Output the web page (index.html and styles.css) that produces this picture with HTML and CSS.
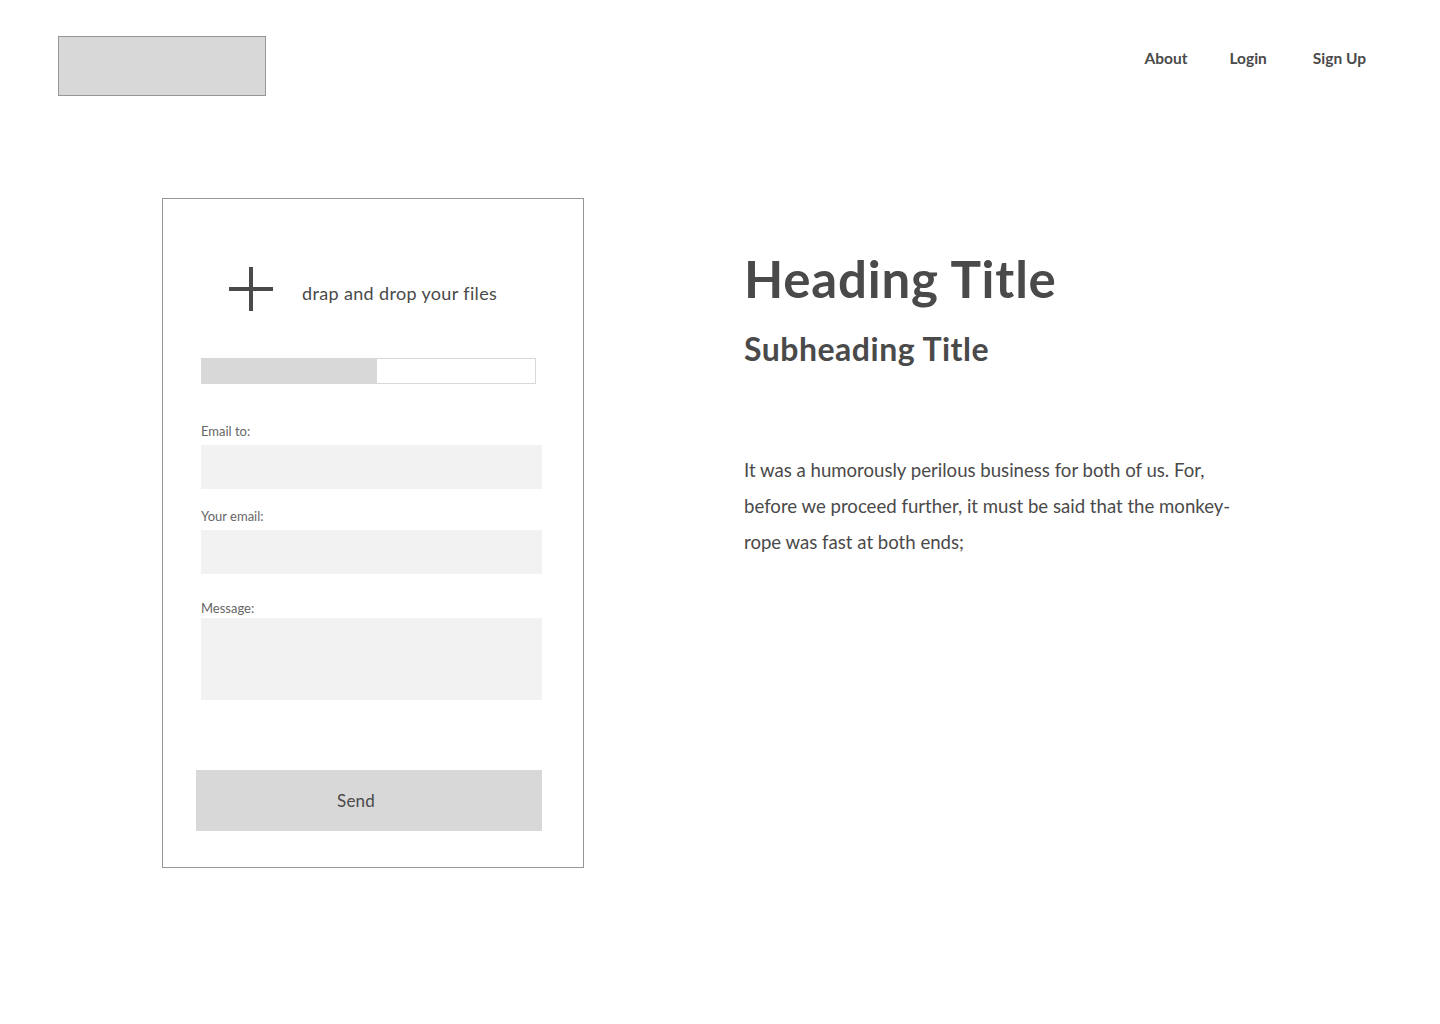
FILE: index.html
```html
<!DOCTYPE html>
<html lang="en">
<head>
<meta charset="utf-8">
<title>Upload</title>
<link rel="stylesheet" href="styles.css">
</head>
<body>
<header class="topbar">
  <div class="logo"></div>
  <nav class="nav">
    <a class="nav-link" href="#">About</a>
    <a class="nav-link" href="#">Login</a>
    <a class="nav-link" href="#">Sign Up</a>
  </nav>
</header>
<main class="main">
  <section class="card">
    <div class="drop">
      <svg class="plus" width="44" height="44" viewBox="0 0 44 44" aria-hidden="true">
        <rect x="0" y="20" width="44" height="4" fill="#4a4a4a"/>
        <rect x="20" y="0" width="4" height="44" fill="#4a4a4a"/>
      </svg>
      <span class="drop-text">drap and drop your files</span>
    </div>
    <div class="progress"><div class="progress-fill" style="width:175px"></div></div>
    <label class="label label-first">Email to:</label>
    <div class="input"></div>
    <label class="label label-second">Your email:</label>
    <div class="input"></div>
    <label class="label label-third">Message:</label>
    <div class="textarea"></div>
    <button class="send">Send</button>
  </section>
  <section class="content">
    <h1 class="heading">Heading Title</h1>
    <h2 class="subheading">Subheading Title</h2>
    <p class="body-text">It was a humorously perilous business for both of us. For,<br>before we proceed further, it must be said that the monkey-<br>rope was fast at both ends;</p>
  </section>
</main>
</body>
</html>
```
FILE: styles.css
```css
* { box-sizing: border-box; }
html, body { margin: 0; padding: 0; background: #fff; }
body {
  font-family: "Lato", "Noto Sans", sans-serif;
  color: #4a4a4a;
  width: 1440px;
  height: 1024px;
}
.topbar {
  display: flex;
  justify-content: space-between;
  align-items: flex-start;
  padding: 36px 74px 0 58px;
}
.logo {
  width: 208px;
  height: 60px;
  background: #d8d8d8;
  border: 1px solid #979797;
}
.nav {
  display: flex;
  gap: 42px;
  margin-top: 12px;
}
.nav-link {
  font-size: 15.5px;
  line-height: 20px;
  font-weight: 700;
  color: #4a4a4a;
  text-decoration: none;
}
.nav-link:last-child { margin-left: 4px; }
.main {
  display: flex;
  align-items: flex-start;
  padding: 102px 0 0 162px;
  gap: 160px;
}
.card {
  width: 422px;
  height: 670px;
  border: 1px solid #979797;
  padding: 0 41px 0 38px;
  display: flex;
  flex-direction: column;
  align-items: flex-start;
}
.drop {
  display: flex;
  align-items: center;
  margin-top: 68px;
  padding-left: 28px;
}
.plus { display: block; }
.drop-text {
  margin-left: 29px;
  margin-top: 7px;
  font-size: 18px;
  letter-spacing: 0.35px;
  font-weight: 400;
  color: #4a4a4a;
}
.progress {
  margin-top: 47px;
  width: 335px;
  height: 26px;
  border: 1px solid #d8d8d8;
  background: #fff;
}
.progress-fill {
  height: 100%;
  background: #d8d8d8;
}
.label {
  display: block;
  font-size: 13px;
  line-height: 14px;
  color: #666;
}
.label-first { margin-top: 40px; }
.label-second { margin-top: 20px; }
.label-third { margin-top: 27px; }
.input {
  margin-top: 7px;
  width: 341px;
  height: 44px;
  background: #f2f2f2;
}
.textarea {
  margin-top: 3px;
  width: 341px;
  height: 82px;
  background: #f2f2f2;
}
.send {
  margin-top: 70px;
  margin-left: -5px;
  width: 346px;
  height: 61px;
  border: 0;
  background: #d8d8d8;
  font-family: "Lato", "Noto Sans", sans-serif;
  font-size: 17px;
  letter-spacing: 0.2px;
  font-weight: 400;
  color: #4a4a4a;
  padding: 0 26px 0 0;
}
.content {
  padding-top: 50px;
}
.heading {
  margin: 0;
  font-size: 51px;
  line-height: 62px;
  letter-spacing: 0.8px;
  font-weight: 700;
  color: #4a4a4a;
}
.subheading {
  margin: 18px 0 0;
  font-size: 32px;
  line-height: 42px;
  letter-spacing: 0.5px;
  font-weight: 700;
  color: #4a4a4a;
}
.body-text {
  margin: 82px 0 0;
  font-size: 18.6px;
  line-height: 36px;
  font-weight: 400;
  color: #4a4a4a;
}
```
